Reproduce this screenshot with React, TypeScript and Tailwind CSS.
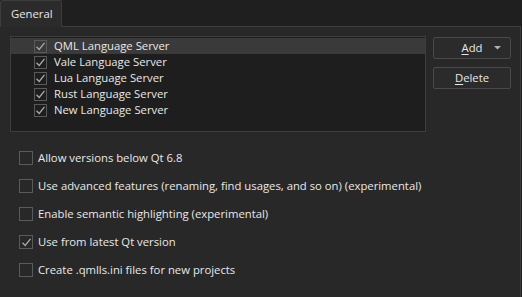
import React from "react";

const Check = ({ checked, size = 13, bg = "#1e1e1e" }: { checked: boolean; size?: number; bg?: string }) => (
  <div
    className="shrink-0 border border-[#5a5a5a] flex items-center justify-center"
    style={{ width: size, height: size, background: bg }}
  >
    {checked && (
      <svg width="11" height="11" viewBox="0 0 11 11">
        <path d="M1.5 5.8 L4.2 8.5 L9.5 1.8" fill="none" stroke="#a8a8a8" strokeWidth="1.3" />
      </svg>
    )}
  </div>
);

const servers = [
  "QML Language Server",
  "Vale Language Server",
  "Lua Language Server",
  "Rust Language Server",
  "New Language Server",
];

const options: [string, boolean][] = [
  ["Allow versions below Qt 6.8", false],
  ["Use advanced features (renaming, find usages, and so on) (experimental)", false],
  ["Enable semantic highlighting (experimental)", false],
  ["Use from latest Qt version", true],
  ["Create .qmlls.ini files for new projects", false],
];

export default function App() {
  return (
    <div
      className="w-[522px] h-[297px] bg-[#1f1f1f] flex flex-col text-[11.3px] text-[#e8e8e8] overflow-hidden"
      style={{ fontFamily: "'Open Sans', sans-serif" }}
    >
      <div className="h-[26px] flex shrink-0">
        <div className="w-[62px] h-[27px] bg-[#2b2b2b] border border-b-0 border-[#3c3c3c] rounded-tl-[3px] rounded-tr-[2px] pl-[10px] pt-[5px] relative z-10 leading-[15px]">
          General
        </div>
      </div>
      <div className="flex-1 bg-[#282828] border-t border-r border-[#3c3c3c] w-[521px]">
        <div className="flex pt-[9px] pl-[10px]">
          <div className="w-[416px] h-[96px] bg-[#1e1e1e] border border-[#3e3e3e] pt-[1px]">
            {servers.map((s, i) => (
              <div
                key={s}
                className={`h-[16px] flex items-center pl-[23px] gap-[7px] leading-[16px] ${i === 0 ? "bg-[#3a3a3a]" : ""}`}
              >
                <Check checked={true} bg={i === 0 ? "#3a3a3a" : "#1e1e1e"} />
                <span>{s}</span>
              </div>
            ))}
          </div>
          <div className="flex flex-col gap-[8px] ml-[7px] pt-[1px]">
            <button className="w-[78px] h-[22px] bg-[#2b2b2b] border border-[#4a4a4a] rounded-[2px] relative flex items-center justify-center">
              <span>
                <span className="underline underline-offset-2">A</span>dd
              </span>
              <svg className="absolute right-[9px] top-[8px]" width="7" height="4" viewBox="0 0 7 4">
                <path d="M0 0 L7 0 L3.5 3.5 Z" fill="#b0b0b0" />
              </svg>
            </button>
            <button className="w-[78px] h-[22px] bg-[#2b2b2b] border border-[#4a4a4a] rounded-[2px] flex items-center justify-center">
              <span>
                <span className="underline underline-offset-2">D</span>elete
              </span>
            </button>
          </div>
        </div>
        <div className="flex flex-col pl-[19px] pt-[19px] gap-[14px]">
          {options.map(([t, c]) => (
            <div key={t} className="flex items-center gap-[5px] h-[14px]">
              <Check checked={c} size={14} bg="#282828" />
              <span className="leading-[14px]">{t}</span>
            </div>
          ))}
        </div>
      </div>
    </div>
  );
}
